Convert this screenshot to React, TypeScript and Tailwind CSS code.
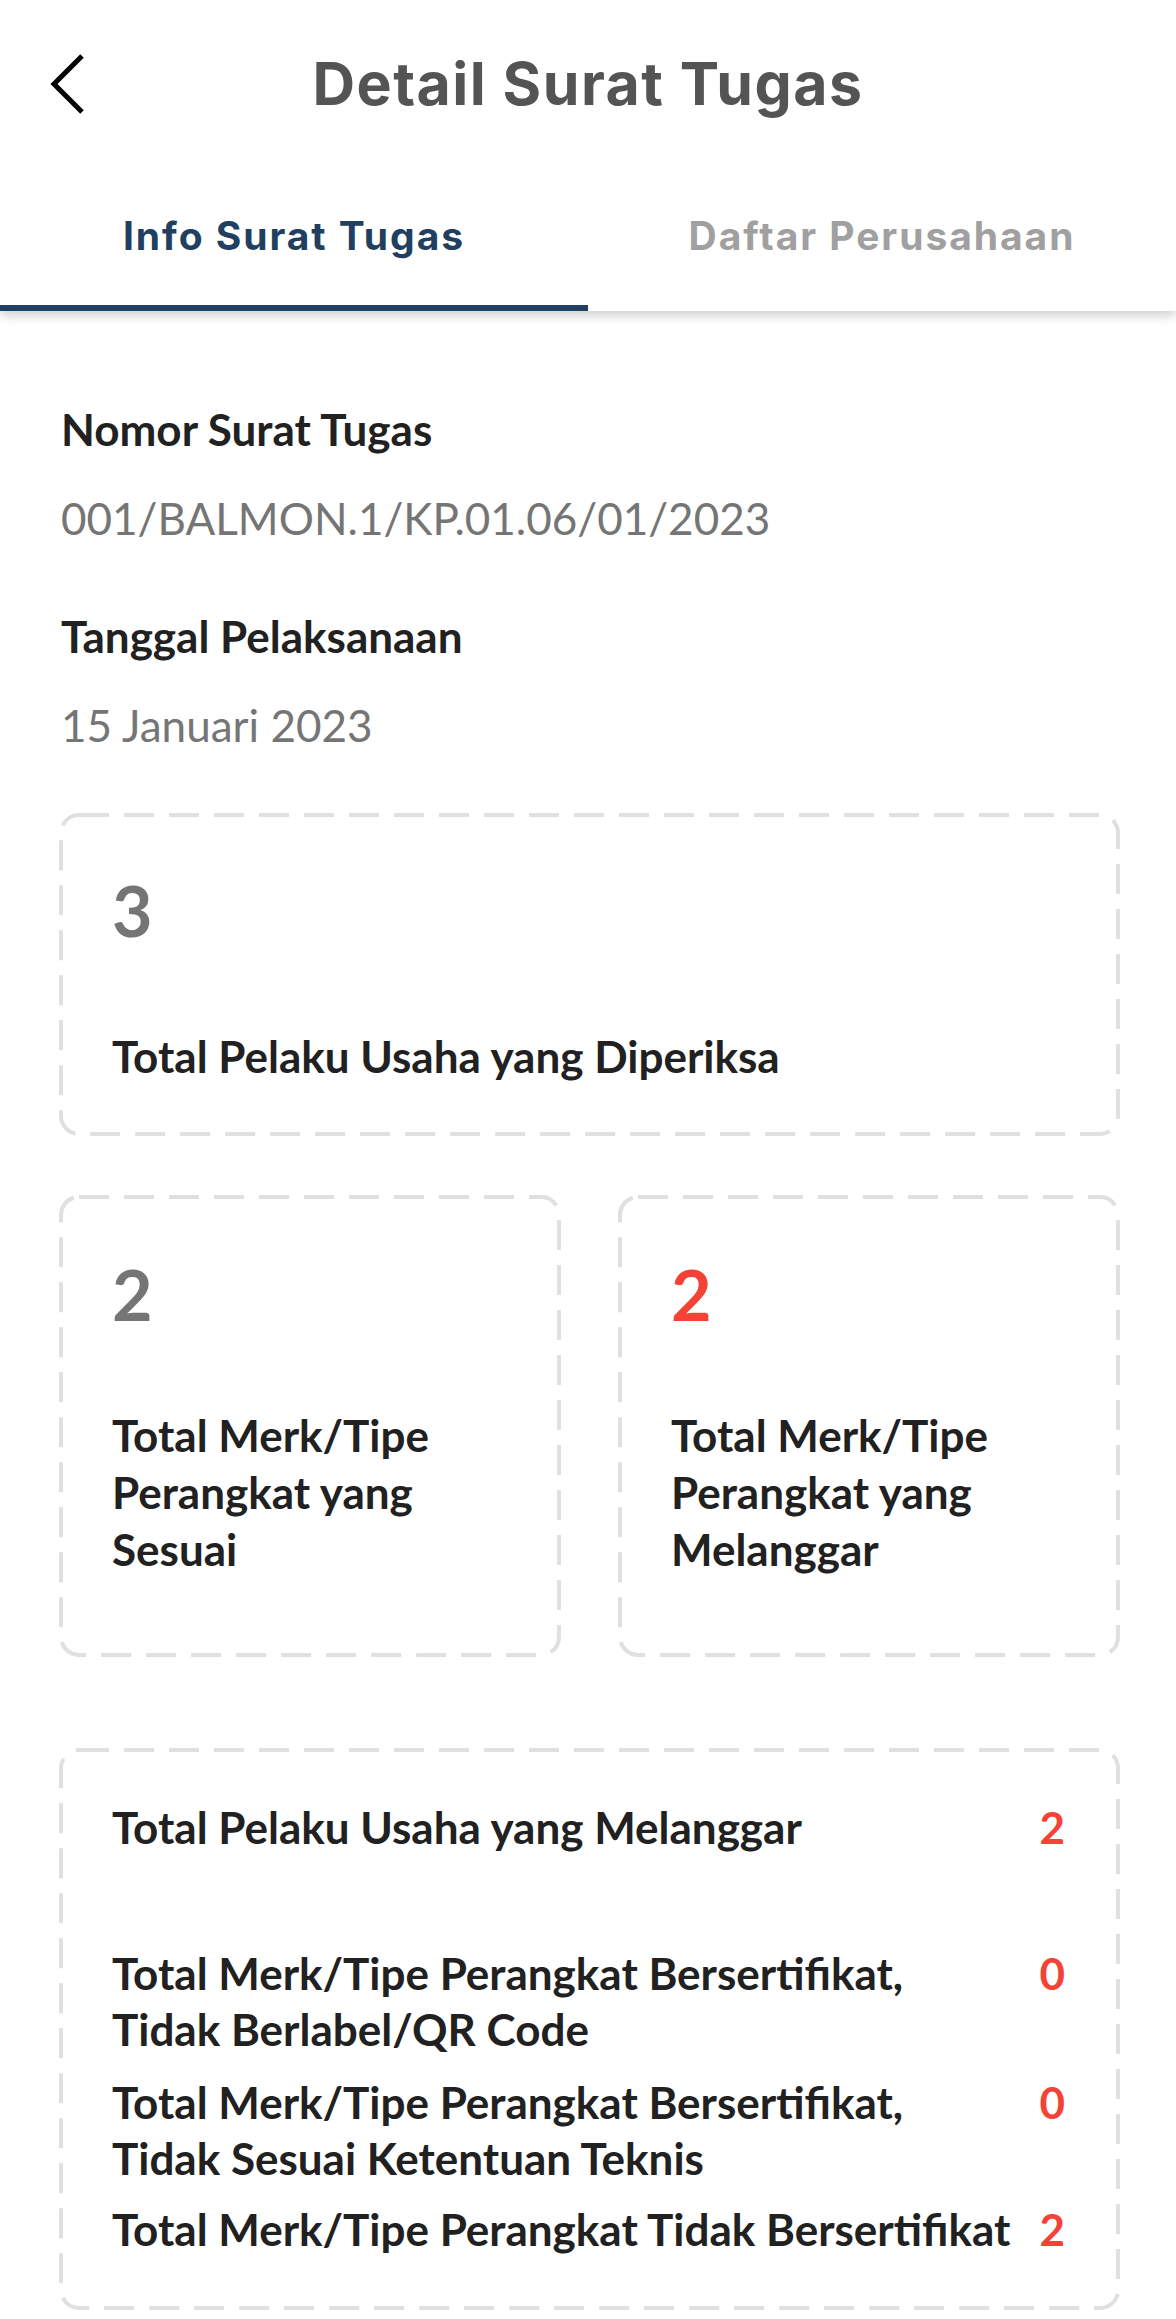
import React from "react";

const body = { fontFamily: "Lato, 'Noto Sans', sans-serif" };
const head = { fontFamily: "Inter, Roboto, 'Liberation Sans', sans-serif" };

function DashedBox({ className, children }: { className?: string; children: React.ReactNode }) {
  return (
    <div className={`relative ${className ?? ""}`}>
      <svg className="absolute left-[2px] top-[2px] w-[calc(100%-4px)] h-[calc(100%-4px)] overflow-visible pointer-events-none">
        <rect
          width="100%"
          height="100%"
          rx="18"
          fill="none"
          stroke="#e0e0e0"
          strokeWidth="4"
          strokeDasharray="30 15"
        />
      </svg>
      {children}
    </div>
  );
}

function Field({ label, value, top }: { label: string; value: string; top: string }) {
  return (
    <div className={`ml-[2px] ${top}`}>
      <div className="text-[44px] leading-[56px] font-bold text-[#212121]">{label}</div>
      <div className="mt-[33px] text-[44px] leading-[56px] text-[#757575]">{value}</div>
    </div>
  );
}

export default function App() {
  const rows = [
    { lines: ["Total Pelaku Usaha yang Melanggar"], value: "2", mt: "" },
    { lines: ["Total Merk/Tipe Perangkat Bersertifikat,", "Tidak Berlabel/QR Code"], value: "0", mt: "mt-[90px]" },
    { lines: ["Total Merk/Tipe Perangkat Bersertifikat,", "Tidak Sesuai Ketentuan Teknis"], value: "0", mt: "mt-[17px]" },
    { lines: ["Total Merk/Tipe Perangkat Tidak Bersertifikat"], value: "2", mt: "mt-[15px]" },
  ];

  return (
    <div className="w-[1176px] min-h-[2319px] bg-white" style={body}>
      <div className="relative z-10 bg-white shadow-[0_5px_10px_rgba(0,0,0,0.18)]">
        <div className="grid grid-cols-[120px_1fr_120px] items-center h-[168px]">
          <div className="pl-[49px]">
            <svg width="36" height="60" viewBox="0 0 36 60" fill="none">
              <polyline points="33,2 5,30 33,58" stroke="#000" strokeWidth="5" />
            </svg>
          </div>
          <h1 className="text-center text-[59px] tracking-[0.025em] font-bold text-[#545454]" style={head}>
            Detail Surat Tugas
          </h1>
          <div />
        </div>
        <div className="grid grid-cols-2 h-[143px]" style={head}>
          <div className="flex items-center justify-center border-b-[6px] border-[#213f60] text-[39px] tracking-[0.05em] font-bold text-[#213f60]">
            Info Surat Tugas
          </div>
          <div className="flex items-center justify-center border-b-[6px] border-transparent text-[39px] tracking-[0.05em] font-bold text-[#a0a0a0]">
            Daftar Perusahaan
          </div>
        </div>
      </div>

      <div className="pl-[59px] pr-[56px] pb-[9px]">
        <Field label="Nomor Surat Tugas" value="001/BALMON.1/KP.01.06/01/2023" top="pt-[90px]" />
        <Field label="Tanggal Pelaksanaan" value="15 Januari 2023" top="mt-[62px]" />

        <DashedBox className="mt-[60px] h-[323px] pl-[53px] pr-[53px] pt-[62px]">
          <div className="text-[70px] leading-[70px] font-bold text-[#757575]">3</div>
          <div className="mt-[83px] text-[44px] leading-[56px] font-bold text-[#212121]">
            Total Pelaku Usaha yang Diperiksa
          </div>
        </DashedBox>

        <div className="mt-[59px] grid grid-cols-2 gap-[57px]">
          <DashedBox className="h-[462px] pl-[53px] pt-[64px]">
            <div className="text-[70px] leading-[70px] font-bold text-[#757575]">2</div>
            <div className="mt-[78px] text-[44px] leading-[57px] font-bold text-[#212121]">
              Total Merk/Tipe
              <br />
              Perangkat yang
              <br />
              Sesuai
            </div>
          </DashedBox>
          <DashedBox className="h-[462px] pl-[53px] pt-[64px]">
            <div className="text-[70px] leading-[70px] font-bold text-[#f44336]">2</div>
            <div className="mt-[78px] text-[44px] leading-[57px] font-bold text-[#212121]">
              Total Merk/Tipe
              <br />
              Perangkat yang
              <br />
              Melanggar
            </div>
          </DashedBox>
        </div>

        <DashedBox className="mt-[91px] h-[562px] pl-[53px] pr-[55px] pt-[51px]">
          {rows.map((r, i) => (
            <div key={i} className={`flex justify-between items-start ${r.mt}`}>
              <div className="text-[44px] leading-[56px] font-bold text-[#212121] whitespace-nowrap">
                {r.lines.map((l, j) => (
                  <div key={j}>{l}</div>
                ))}
              </div>
              <div className="w-[40px] text-right text-[44px] leading-[56px] font-bold text-[#f44336]">
                {r.value}
              </div>
            </div>
          ))}
        </DashedBox>
      </div>
    </div>
  );
}
